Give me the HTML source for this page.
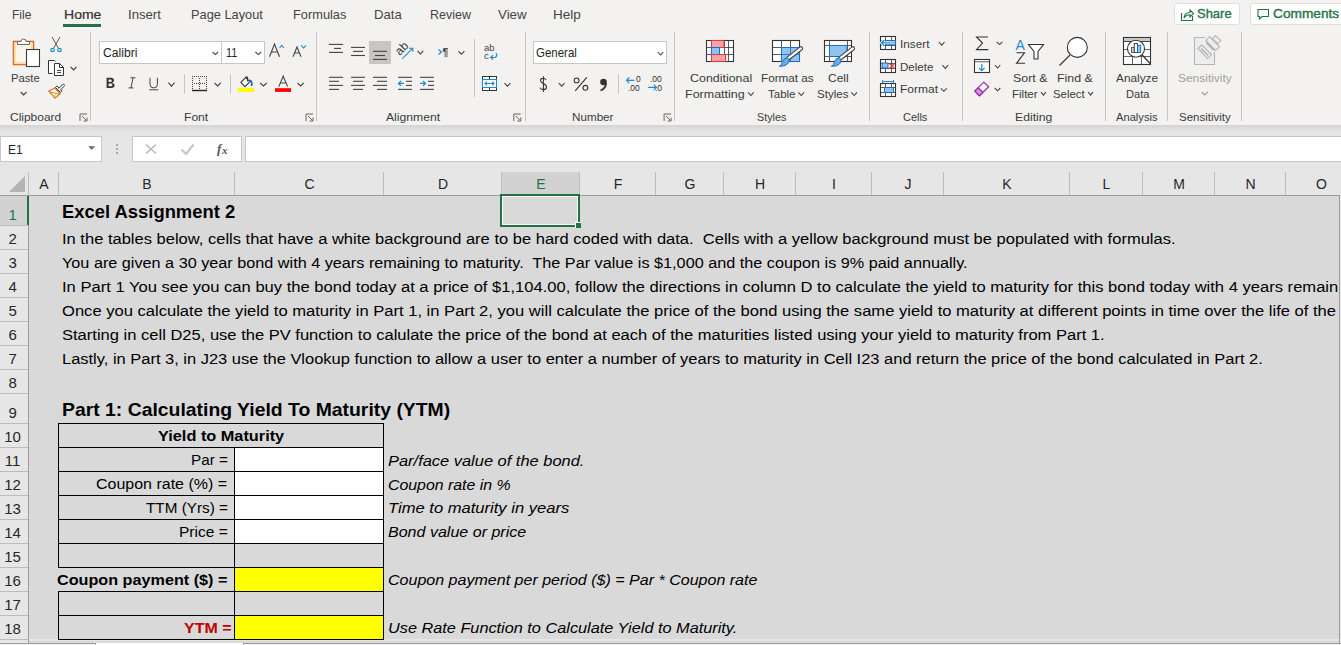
<!DOCTYPE html><html><head><meta charset='utf-8'><style>
*{margin:0;padding:0}
html,body{width:1341px;height:645px;overflow:hidden;background:#e6e6e6}
body{position:relative;font-family:"Liberation Sans",sans-serif}
.b{position:absolute}
.i{position:absolute;overflow:visible}
.t{position:absolute;white-space:pre;transform-origin:0 0}
.sc{transform:scaleX(1.0763)}
#clip{position:absolute;left:0;top:0;width:1339px;height:645px;overflow:hidden}
</style></head><body><div class='b' style='left:0px;top:0px;width:1341px;height:125px;background:#f3f2f1'></div>
<div class='b' style='left:0px;top:125px;width:1341px;height:47px;background:#e6e6e6'></div>
<div class='b' style='left:0px;top:125px;width:1341px;height:7px;background:linear-gradient(#d4d4d4,#e6e6e6)'></div>
<div class='b' style='left:0px;top:172px;width:1341px;height:473px;background:#e6e6e6'></div>
<div class='b' style='left:29px;top:196px;width:1310px;height:443px;background:#d9d9d9'></div>
<div class='b' style='left:28px;top:172px;width:1px;height:23px;background:#bcbcbc'></div>
<div class='b' style='left:58px;top:172px;width:1px;height:23px;background:#bcbcbc'></div>
<div class='b' style='left:234px;top:172px;width:1px;height:23px;background:#bcbcbc'></div>
<div class='b' style='left:383px;top:172px;width:1px;height:23px;background:#bcbcbc'></div>
<div class='b' style='left:501px;top:172px;width:1px;height:23px;background:#bcbcbc'></div>
<div class='b' style='left:579px;top:172px;width:1px;height:23px;background:#bcbcbc'></div>
<div class='b' style='left:655px;top:172px;width:1px;height:23px;background:#bcbcbc'></div>
<div class='b' style='left:723px;top:172px;width:1px;height:23px;background:#bcbcbc'></div>
<div class='b' style='left:795px;top:172px;width:1px;height:23px;background:#bcbcbc'></div>
<div class='b' style='left:871px;top:172px;width:1px;height:23px;background:#bcbcbc'></div>
<div class='b' style='left:943px;top:172px;width:1px;height:23px;background:#bcbcbc'></div>
<div class='b' style='left:1069px;top:172px;width:1px;height:23px;background:#bcbcbc'></div>
<div class='b' style='left:1142px;top:172px;width:1px;height:23px;background:#bcbcbc'></div>
<div class='b' style='left:1214px;top:172px;width:1px;height:23px;background:#bcbcbc'></div>
<div class='b' style='left:1285px;top:172px;width:1px;height:23px;background:#bcbcbc'></div>
<div class='b' style='left:0px;top:195px;width:1339px;height:1px;background:#9e9e9e'></div>
<div class='b' style='left:1339px;top:195px;width:1px;height:449px;background:#9e9e9e'></div>
<div class='b' style='left:0px;top:225px;width:28px;height:1px;background:#bcbcbc'></div>
<div class='b' style='left:0px;top:249px;width:28px;height:1px;background:#bcbcbc'></div>
<div class='b' style='left:0px;top:273px;width:28px;height:1px;background:#bcbcbc'></div>
<div class='b' style='left:0px;top:297px;width:28px;height:1px;background:#bcbcbc'></div>
<div class='b' style='left:0px;top:321px;width:28px;height:1px;background:#bcbcbc'></div>
<div class='b' style='left:0px;top:345px;width:28px;height:1px;background:#bcbcbc'></div>
<div class='b' style='left:0px;top:369px;width:28px;height:1px;background:#bcbcbc'></div>
<div class='b' style='left:0px;top:393px;width:28px;height:1px;background:#bcbcbc'></div>
<div class='b' style='left:0px;top:423px;width:28px;height:1px;background:#bcbcbc'></div>
<div class='b' style='left:0px;top:447px;width:28px;height:1px;background:#bcbcbc'></div>
<div class='b' style='left:0px;top:471px;width:28px;height:1px;background:#bcbcbc'></div>
<div class='b' style='left:0px;top:495px;width:28px;height:1px;background:#bcbcbc'></div>
<div class='b' style='left:0px;top:519px;width:28px;height:1px;background:#bcbcbc'></div>
<div class='b' style='left:0px;top:543px;width:28px;height:1px;background:#bcbcbc'></div>
<div class='b' style='left:0px;top:567px;width:28px;height:1px;background:#bcbcbc'></div>
<div class='b' style='left:0px;top:591px;width:28px;height:1px;background:#bcbcbc'></div>
<div class='b' style='left:0px;top:615px;width:28px;height:1px;background:#bcbcbc'></div>
<div class='b' style='left:0px;top:639px;width:28px;height:1px;background:#bcbcbc'></div>
<div class='b' style='left:28px;top:196px;width:1px;height:447px;background:#9e9e9e'></div>
<svg class='i' style='left:8px;top:175px;' width='18' height='18' viewBox='0 0 18 18'><path d='M17 1 L17 17 L1 17 Z' fill='#b4b4b4'/></svg>
<div class='b' style='left:502px;top:172px;width:77px;height:23px;background:#d2d2d2'></div>
<div class='b' style='left:0px;top:196px;width:28px;height:29px;background:#d2d2d2'></div>
<div class='b' style='left:27px;top:196px;width:2px;height:29px;background:#217346'></div>
<div class='b' style='left:29px;top:640px;width:1310px;height:3px;background:#d9d9d9'></div>
<div class='b' style='left:29px;top:640px;width:1310px;height:1px;background:#e4e4e4'></div>
<div class='b' style='left:0px;top:643px;width:1341px;height:2px;background:#f0f0f0'></div>
<div class='b' style='left:0px;top:643px;width:1341px;height:1px;background:#a0a0a0'></div>
<div class='b' style='left:95px;top:643px;width:149px;height:2px;background:#ffffff;border-left:1px solid #a0a0a0;border-right:1px solid #a0a0a0;box-sizing:border-box'></div>
<div class='b' style='left:58px;top:423px;width:326px;height:1px;background:#000'></div>
<div class='b' style='left:58px;top:447px;width:326px;height:1px;background:#000'></div>
<div class='b' style='left:58px;top:471px;width:326px;height:1px;background:#000'></div>
<div class='b' style='left:58px;top:495px;width:326px;height:1px;background:#000'></div>
<div class='b' style='left:58px;top:519px;width:326px;height:1px;background:#000'></div>
<div class='b' style='left:58px;top:543px;width:326px;height:1px;background:#000'></div>
<div class='b' style='left:58px;top:567px;width:326px;height:1px;background:#000'></div>
<div class='b' style='left:58px;top:591px;width:326px;height:1px;background:#000'></div>
<div class='b' style='left:58px;top:615px;width:326px;height:1px;background:#000'></div>
<div class='b' style='left:58px;top:639px;width:326px;height:1px;background:#000'></div>
<div class='b' style='left:58px;top:423px;width:1px;height:144px;background:#000'></div>
<div class='b' style='left:58px;top:591px;width:1px;height:49px;background:#000'></div>
<div class='b' style='left:383px;top:423px;width:1px;height:217px;background:#000'></div>
<div class='b' style='left:234px;top:447px;width:1px;height:193px;background:#000'></div>
<div class='b' style='left:235px;top:448px;width:148px;height:23px;background:#fff'></div>
<div class='b' style='left:235px;top:472px;width:148px;height:23px;background:#fff'></div>
<div class='b' style='left:235px;top:496px;width:148px;height:23px;background:#fff'></div>
<div class='b' style='left:235px;top:520px;width:148px;height:23px;background:#fff'></div>
<div class='b' style='left:235px;top:568px;width:148px;height:23px;background:#ffff00'></div>
<div class='b' style='left:235px;top:616px;width:148px;height:23px;background:#ffff00'></div>
<div class='b' style='left:500px;top:194px;width:80px;height:33px;border:2px solid #217346;box-sizing:border-box'></div>
<div class='b' style='left:502px;top:196px;width:76px;height:29px;border:1px solid #fff;box-sizing:border-box'></div>
<div class='b' style='left:575px;top:222px;width:6px;height:6px;background:#fff'></div>
<div class='b' style='left:576px;top:223px;width:5px;height:5px;background:#217346'></div>
<div class='b' style='left:63px;top:24px;width:38px;height:3px;background:#217346'></div>
<div class='b' style='left:1174px;top:3px;width:66px;height:22px;background:#fff;border:1px solid #e1dfdd;border-radius:3px;box-sizing:border-box'></div>
<div class='b' style='left:1250px;top:3px;width:100px;height:22px;background:#fff;border:1px solid #e1dfdd;border-radius:3px;box-sizing:border-box'></div>
<div class='b' style='left:90px;top:32px;width:1px;height:89px;background:#c8c6c4'></div>
<div class='b' style='left:316px;top:32px;width:1px;height:89px;background:#c8c6c4'></div>
<div class='b' style='left:525px;top:32px;width:1px;height:89px;background:#c8c6c4'></div>
<div class='b' style='left:674px;top:32px;width:1px;height:89px;background:#c8c6c4'></div>
<div class='b' style='left:869px;top:32px;width:1px;height:89px;background:#c8c6c4'></div>
<div class='b' style='left:962px;top:32px;width:1px;height:89px;background:#c8c6c4'></div>
<div class='b' style='left:1105px;top:32px;width:1px;height:89px;background:#c8c6c4'></div>
<div class='b' style='left:1167px;top:32px;width:1px;height:89px;background:#c8c6c4'></div>
<div class='b' style='left:1241px;top:32px;width:1px;height:89px;background:#c8c6c4'></div>
<div class='b' style='left:99px;top:41px;width:123px;height:23px;background:#fff;border:1px solid #c8c6c4;box-sizing:border-box'></div>
<div class='b' style='left:221px;top:41px;width:44px;height:23px;background:#fff;border:1px solid #c8c6c4;box-sizing:border-box'></div>
<div class='b' style='left:533px;top:41px;width:134px;height:23px;background:#fff;border:1px solid #c8c6c4;box-sizing:border-box'></div>
<div class='b' style='left:369px;top:41px;width:22px;height:23px;background:#c8c6c4'></div>
<div class='b' style='left:0px;top:136px;width:102px;height:26px;background:#fff;border:1px solid #c6c6c6;box-sizing:border-box'></div>
<div class='b' style='left:132px;top:136px;width:110px;height:26px;background:#fff;border:1px solid #c6c6c6;box-sizing:border-box'></div>
<div class='b' style='left:245px;top:136px;width:1100px;height:26px;background:#fff;border:1px solid #c6c6c6;box-sizing:border-box'></div>
<div class='b' style='left:184px;top:74px;width:1px;height:20px;background:#c8c6c4'></div>
<div class='b' style='left:230px;top:74px;width:1px;height:20px;background:#c8c6c4'></div>
<div class='b' style='left:618px;top:74px;width:1px;height:20px;background:#c8c6c4'></div>
<div class='b' style='left:474px;top:39px;width:1px;height:58px;background:#c8c6c4'></div>
<svg class='i' style='left:0;top:0' width='1341' height='170' viewBox='0 0 1341 170'><rect x='13.5' y='41.5' width='20' height='23' fill='#fff' stroke='#d9731f' stroke-width='1.6'/><rect x='15.5' y='43.5' width='16' height='19' fill='#fbf6ec' stroke='#fbe3a8' stroke-width='1.2'/><path d='M17.5 44.5 V41.5 H21 A2.5 2.5 0 0 1 26 41.5 H29.5 V44.5 Z' fill='#fff' stroke='#666' stroke-width='1'/><rect x='26.5' y='49.5' width='13' height='17' fill='#fff' stroke='#3b3b3b' stroke-width='1.1'/><path d='M20.7 92 L23.6 95 L26.5 92' fill='none' stroke='#444' stroke-width='1.1'/><path d='M52 37 L58.5 48.5 M60 37 L53.5 48.5' stroke='#555' stroke-width='1' fill='none'/><circle cx='52.5' cy='50' r='1.7' fill='none' stroke='#1e8bcd' stroke-width='1.2'/><circle cx='59.5' cy='50' r='1.7' fill='none' stroke='#1e8bcd' stroke-width='1.2'/><path d='M52.5 73.5 H48.5 V60.5 H54.5 L55.5 61.5' fill='#fafafa' stroke='#333' stroke-width='1'/><path d='M54.5 63.5 H59.5 L63.5 67.5 V75.5 H54.5 Z' fill='#fff' stroke='#333' stroke-width='1'/><path d='M59.5 63.5 V67.5 H63.5' fill='none' stroke='#333' stroke-width='1'/><path d='M57 70.5 H61 M57 72.5 H61' stroke='#444' stroke-width='1'/><path d='M70.7 67 L73.6 70 L76.5 67' fill='none' stroke='#444' stroke-width='1.1'/><path d='M48.8 91.1 L54.9 88 L60.2 93.8 L55.1 98.1 Z' fill='#fff' stroke='#e07b1e' stroke-width='1.3' stroke-linejoin='round'/><path d='M49.8 92 L60 94.3' stroke='#e07b1e' stroke-width='1.1'/><path d='M52.3 94.6 L57.8 95.5 L55.2 97.3 Z' fill='#f7c76a'/><path d='M55.4 87.4 L56.9 85.9 L61.9 90.9 L60.4 92.4 Z' fill='#fff' stroke='#333' stroke-width='1'/><path d='M58.6 88.6 L62.4 84.8 Q63.4 83.8 64.2 84.6 Q65 85.4 64 86.4 L60.2 90.2' fill='#fff' stroke='#333' stroke-width='1'/><path d='M212.6 52 L215.35 54.6 L218.1 52' fill='none' stroke='#444' stroke-width='1.1'/><path d='M255.4 52 L258.3 54.6 L261.2 52' fill='none' stroke='#444' stroke-width='1.1'/><path d='M269.5 56.7 L274.5 44 L279.5 56.7 M271.3 52 H277.7' fill='none' stroke='#444' stroke-width='1.1'/><path d='M279.5 48 L281.8 45.3 L284 48' fill='none' stroke='#1e8bcd' stroke-width='1.1'/><path d='M293 56.7 L297 47 L301 56.7 M294.5 53 H299.5' fill='none' stroke='#444' stroke-width='1.1'/><path d='M301 45.3 L303.5 48 L306 45.3' fill='none' stroke='#1e8bcd' stroke-width='1.1'/><path d='M106.6 77.8 H110.8 Q114 77.8 114 80.5 Q114 82.3 111.8 82.7 Q114.6 83.2 114.6 85.3 Q114.6 87.9 111 87.9 H106.6 Z M108.6 79.6 V82 H110.5 Q111.8 82 111.8 80.8 Q111.8 79.6 110.5 79.6 Z M108.6 83.6 V86.2 H110.8 Q112.4 86.2 112.4 84.9 Q112.4 83.6 110.8 83.6 Z' fill='#333' fill-rule='evenodd'/><path d='M130.5 77.8 H135.5 M128.5 87.9 H133.5 M133 77.8 L131 87.9' stroke='#444' stroke-width='1' fill='none'/><path d='M150 77.8 V84.5 Q150 87.9 153.7 87.9 Q157.4 87.9 157.4 84.5 V77.8 M149.3 89.8 H158.2' stroke='#444' stroke-width='1' fill='none'/><path d='M168.4 82.7 L171.5 86.2 L174.6 82.7' fill='none' stroke='#444' stroke-width='1.1'/><rect x='192' y='76' width='1' height='1' fill='#444'/><rect x='194' y='76' width='1' height='1' fill='#444'/><rect x='196' y='76' width='1' height='1' fill='#444'/><rect x='198' y='76' width='1' height='1' fill='#444'/><rect x='200' y='76' width='1' height='1' fill='#444'/><rect x='202' y='76' width='1' height='1' fill='#444'/><rect x='204' y='76' width='1' height='1' fill='#444'/><rect x='206' y='76' width='1' height='1' fill='#444'/><rect x='192' y='78' width='1' height='1' fill='#444'/><rect x='206' y='78' width='1' height='1' fill='#444'/><rect x='199' y='78' width='1' height='1' fill='#444'/><rect x='192' y='80' width='1' height='1' fill='#444'/><rect x='206' y='80' width='1' height='1' fill='#444'/><rect x='199' y='80' width='1' height='1' fill='#444'/><rect x='192' y='82' width='1' height='1' fill='#444'/><rect x='206' y='82' width='1' height='1' fill='#444'/><rect x='199' y='82' width='1' height='1' fill='#444'/><rect x='192' y='84' width='1' height='1' fill='#444'/><rect x='206' y='84' width='1' height='1' fill='#444'/><rect x='199' y='84' width='1' height='1' fill='#444'/><rect x='192' y='86' width='1' height='1' fill='#444'/><rect x='206' y='86' width='1' height='1' fill='#444'/><rect x='199' y='86' width='1' height='1' fill='#444'/><rect x='192' y='88' width='1' height='1' fill='#444'/><rect x='206' y='88' width='1' height='1' fill='#444'/><rect x='199' y='88' width='1' height='1' fill='#444'/><rect x='194' y='83' width='1' height='1' fill='#444'/><rect x='196' y='83' width='1' height='1' fill='#444'/><rect x='198' y='83' width='1' height='1' fill='#444'/><rect x='200' y='83' width='1' height='1' fill='#444'/><rect x='202' y='83' width='1' height='1' fill='#444'/><rect x='204' y='83' width='1' height='1' fill='#444'/><path d='M192 90.5 H207' stroke='#222' stroke-width='1.4'/><path d='M214.6 83 L217.6 86 L220.6 83' fill='none' stroke='#444' stroke-width='1.1'/><path d='M245.6 77.6 L240.9 82.4 L245 86.6 L250 81.6 Z' fill='#fff' stroke='#333' stroke-width='1.1' stroke-linejoin='round'/><path d='M245.6 77.6 Q246.6 75.9 247.6 77.5 V81.4' fill='none' stroke='#333' stroke-width='1.1'/><path d='M249.3 80.4 Q252.4 80.2 251.6 86' fill='none' stroke='#1565c0' stroke-width='1.7'/><rect x='238' y='88' width='16' height='4' fill='#ffff00'/><path d='M260.2 83 L263.45 86 L266.7 83' fill='none' stroke='#444' stroke-width='1.1'/><path d='M278.8 86.6 L283.2 76.2 L287.6 86.6 M280.4 83 H286' fill='none' stroke='#444' stroke-width='1.1'/><rect x='275' y='88.2' width='16' height='3.7' fill='#ff0000'/><path d='M297.5 83 L300.6 86 L303.7 83' fill='none' stroke='#444' stroke-width='1.1'/><path d='M80.0 121.0 V114.0 H87.0' fill='none' stroke='#666' stroke-width='1'/><path d='M82.0 116.0 L86.5 120.5 M87.0 117.5 V121.0 H83.5' fill='none' stroke='#666' stroke-width='1'/><path d='M306.0 121.0 V114.0 H313.0' fill='none' stroke='#666' stroke-width='1'/><path d='M308.0 116.0 L312.5 120.5 M313.0 117.5 V121.0 H309.5' fill='none' stroke='#666' stroke-width='1'/><path d='M513.8 121.0 V114.0 H520.8' fill='none' stroke='#666' stroke-width='1'/><path d='M515.8 116.0 L520.3 120.5 M520.8 117.5 V121.0 H517.3' fill='none' stroke='#666' stroke-width='1'/><path d='M664.1 121.0 V114.0 H671.1' fill='none' stroke='#666' stroke-width='1'/><path d='M666.1 116.0 L670.6 120.5 M671.1 117.5 V121.0 H667.6' fill='none' stroke='#666' stroke-width='1'/><path d='M329 44.4 H343' stroke='#444' stroke-width='1.1'/><path d='M334 48.4 H341' stroke='#444' stroke-width='1.1'/><path d='M329 52.4 H343' stroke='#444' stroke-width='1.1'/><path d='M351 47.4 H365' stroke='#444' stroke-width='1.1'/><path d='M353 51.4 H363' stroke='#444' stroke-width='1.1'/><path d='M351 55.5 H365' stroke='#444' stroke-width='1.1'/><path d='M373 51.3 H387' stroke='#444' stroke-width='1.1'/><path d='M375 55.5 H385' stroke='#444' stroke-width='1.1'/><path d='M373 59.4 H387' stroke='#444' stroke-width='1.1'/><text x='0' y='0' transform='translate(399.7 56) rotate(-45)' font-family='Liberation Sans' font-size='12' fill='#333'>ab</text><path d='M402.3 58.7 L412.6 48.4 M409 48.2 H412.8 V52' fill='none' stroke='#1e8bcd' stroke-width='1.1'/><path d='M417.5 50.8 L420.4 53.9 L423.3 50.8' fill='none' stroke='#444' stroke-width='1.1'/><path d='M438.5 49.5 L441.5 52 L438.5 54.5' fill='none' stroke='#1e8bcd' stroke-width='1.3'/><text x='442.5' y='56' font-family='Liberation Sans' font-size='10.5' font-weight='bold' fill='#444'>¶</text><path d='M458.4 51.1 L461.4 54.1 L464.4 51.1' fill='none' stroke='#444' stroke-width='1.1'/><text x='484' y='51.3' font-family='Liberation Sans' font-size='9.5' fill='#444'>ab</text><text x='484' y='59' font-family='Liberation Sans' font-size='9.5' fill='#444'>c</text><path d='M496 53 Q498 56 495 57.5 H491 M493 55.3 L490.7 57.5 L493 59.5' fill='none' stroke='#1e8bcd' stroke-width='1.2'/><path d='M329 77.3 H343' stroke='#444' stroke-width='1.1'/><path d='M329 81.3 H339' stroke='#444' stroke-width='1.1'/><path d='M329 85.4 H343' stroke='#444' stroke-width='1.1'/><path d='M329 89.4 H339' stroke='#444' stroke-width='1.1'/><path d='M351 77.3 H365' stroke='#444' stroke-width='1.1'/><path d='M353 81.3 H363' stroke='#444' stroke-width='1.1'/><path d='M351 85.4 H365' stroke='#444' stroke-width='1.1'/><path d='M353 89.4 H363' stroke='#444' stroke-width='1.1'/><path d='M373 77.3 H387' stroke='#444' stroke-width='1.1'/><path d='M377 81.3 H387' stroke='#444' stroke-width='1.1'/><path d='M373 85.4 H387' stroke='#444' stroke-width='1.1'/><path d='M377 89.4 H387' stroke='#444' stroke-width='1.1'/><path d='M398 77.3 H412' stroke='#444' stroke-width='1.1'/><path d='M406 81.3 H412' stroke='#444' stroke-width='1.1'/><path d='M406 85.4 H412' stroke='#444' stroke-width='1.1'/><path d='M398 89.4 H412' stroke='#444' stroke-width='1.1'/><path d='M404 83.4 H398.5 M401 81 L398.5 83.4 L401 85.8' fill='none' stroke='#1e8bcd' stroke-width='1.2'/><path d='M420 77.3 H434' stroke='#444' stroke-width='1.1'/><path d='M428 81.3 H434' stroke='#444' stroke-width='1.1'/><path d='M428 85.4 H434' stroke='#444' stroke-width='1.1'/><path d='M420 89.4 H434' stroke='#444' stroke-width='1.1'/><path d='M420 83.4 H425.5 M423 81 L425.5 83.4 L423 85.8' fill='none' stroke='#1e8bcd' stroke-width='1.2'/><rect x='482.5' y='76.5' width='14' height='14' fill='#fff' stroke='#333' stroke-width='1'/><rect x='482.5' y='79.5' width='14' height='8' fill='#fff' stroke='#1e8bcd' stroke-width='1.1'/><path d='M489.5 76.5 V79 M489.5 88 V90.5' stroke='#333' stroke-width='1'/><path d='M485 83.5 H494 M486.8 81.7 L485 83.5 L486.8 85.3 M492.2 81.7 L494 83.5 L492.2 85.3' fill='none' stroke='#1e8bcd' stroke-width='1.1'/><path d='M504.5 83.2 L507.45 86.2 L510.4 83.2' fill='none' stroke='#444' stroke-width='1.1'/><path d='M657.8 52 L660.55 55 L663.3 52' fill='none' stroke='#444' stroke-width='1.1'/><path d='M546 80 Q545 78.3 543 78.3 Q540.5 78.3 540.5 80.6 Q540.5 82.4 543.3 83.5 Q546.5 84.7 546.5 86.9 Q546.5 89.6 543.3 89.6 Q540.8 89.6 540 87.6 M543.4 76.3 V92' fill='none' stroke='#333' stroke-width='1.1'/><path d='M558.8 83.2 L561.7 86.2 L564.6 83.2' fill='none' stroke='#444' stroke-width='1.1'/><circle cx='576.6' cy='80.4' r='2.4' fill='none' stroke='#333' stroke-width='1.1'/><circle cx='585.4' cy='87.8' r='2.4' fill='none' stroke='#333' stroke-width='1.1'/><path d='M586.8 77.3 L575.2 90.9' stroke='#333' stroke-width='1.1'/><circle cx='603.5' cy='82' r='3.3' fill='#333'/><path d='M606 83 Q606 88.5 600.5 90.5' fill='none' stroke='#333' stroke-width='1.8'/><path d='M634.5 80.3 H626.5 M629.3 77.5 L626.5 80.3 L629.3 83.1' fill='none' stroke='#1e8bcd' stroke-width='1.2'/><text x='636' y='82.4' font-family='Liberation Sans' font-size='8.5' fill='#333'>0</text><text x='628' y='90.6' font-family='Liberation Sans' font-size='8.5' fill='#333'>.00</text><text x='650' y='82.4' font-family='Liberation Sans' font-size='8.5' fill='#333'>.00</text><text x='655' y='90.6' font-family='Liberation Sans' font-size='8.5' fill='#333'>.0</text><path d='M648.2 87.4 H656.5 M653.7 84.6 L656.5 87.4 L653.7 90.2' fill='none' stroke='#1e8bcd' stroke-width='1.2'/><rect x='706.5' y='40.5' width='27' height='21' fill='#fff' stroke='#333' stroke-width='1.1'/><path d='M711.5 40 V62' stroke='#333' stroke-width='0.8'/><path d='M724.5 40 V62' stroke='#333' stroke-width='0.8'/><path d='M728.5 40 V62' stroke='#333' stroke-width='0.8'/><path d='M706 47.5 H734' stroke='#333' stroke-width='0.8'/><path d='M706 54.5 H734' stroke='#333' stroke-width='0.8'/><rect x='711.5' y='40.5' width='12.5' height='7' fill='#f7a1a8' stroke='#e03a3e' stroke-width='1'/><rect x='711.5' y='47.5' width='8' height='7' fill='#90c3ef' stroke='#1e6fc1' stroke-width='1'/><rect x='711.5' y='54.5' width='14' height='7' fill='#f7a1a8' stroke='#e03a3e' stroke-width='1'/><rect x='772.5' y='40.5' width='27' height='21' fill='#fff' stroke='#333' stroke-width='1.1'/><path d='M781.5 40 V62' stroke='#333' stroke-width='0.8'/><path d='M790.5 40 V62' stroke='#333' stroke-width='0.8'/><path d='M772 47.5 H800' stroke='#333' stroke-width='0.8'/><path d='M772 54.5 H800' stroke='#333' stroke-width='0.8'/><rect x='781.5' y='47.5' width='18' height='14' fill='#90c3ef' stroke='#1e6fc1' stroke-width='1'/><path d='M790.5 47.5 V61.5 M781.5 54.5 H799.5' stroke='#1e6fc1' stroke-width='0.8'/><path d='M787.8 58.7 L800.9 48.400000000000006' stroke='#444' stroke-width='4.4' stroke-linecap='round'/><path d='M787.8 58.7 L800.9 48.400000000000006' stroke='#fff' stroke-width='2.2' stroke-linecap='round'/><path d='M779.3 66.2 Q781.8 65.7 782.3 62.2 Q783.3 58.2 787.3 57.7 Q789.8 59.2 788.8 62.2 Q786.3 66.7 779.3 66.2 Z' fill='#6aaae6' stroke='#1e6fc1' stroke-width='1'/><rect x='824.5' y='40.5' width='27' height='21' fill='#fff' stroke='#333' stroke-width='1.1'/><path d='M829.5 40 V62' stroke='#333' stroke-width='0.8'/><path d='M847.5 40 V62' stroke='#333' stroke-width='0.8'/><path d='M824 45.5 H852' stroke='#333' stroke-width='0.8'/><path d='M824 56.5 H852' stroke='#333' stroke-width='0.8'/><rect x='829.5' y='45.5' width='17.5' height='11' fill='#90c3ef' stroke='#1e6fc1' stroke-width='1'/><path d='M839.8 58.7 L852.9 48.400000000000006' stroke='#444' stroke-width='4.4' stroke-linecap='round'/><path d='M839.8 58.7 L852.9 48.400000000000006' stroke='#fff' stroke-width='2.2' stroke-linecap='round'/><path d='M831.3 66.2 Q833.8 65.7 834.3 62.2 Q835.3 58.2 839.3 57.7 Q841.8 59.2 840.8 62.2 Q838.3 66.7 831.3 66.2 Z' fill='#6aaae6' stroke='#1e6fc1' stroke-width='1'/><path d='M748.2 92.3 L750.95 95.5 L753.7 92.3' fill='none' stroke='#444' stroke-width='1.1'/><path d='M798.4 92.3 L801.25 95.5 L804.1 92.3' fill='none' stroke='#444' stroke-width='1.1'/><path d='M851.3 92.3 L854.15 95.5 L857 92.3' fill='none' stroke='#444' stroke-width='1.1'/><rect x='880.5' y='36.5' width='15' height='13' fill='#fff' stroke='#333' stroke-width='1.1'/><path d='M885.5 36 V50' stroke='#333' stroke-width='0.8'/><path d='M891.5 36 V50' stroke='#333' stroke-width='0.8'/><path d='M880 40.5 H896' stroke='#333' stroke-width='0.8'/><path d='M880 45.5 H896' stroke='#333' stroke-width='0.8'/><rect x='885.5' y='40.5' width='10' height='4.5' fill='#90c3ef' stroke='#1e6fc1' stroke-width='1'/><rect x='881' y='40.6' width='4' height='4.6' fill='#fff'/><path d='M890.5 42.8 H881.5 M884.3 40 L881.5 42.8 L884.3 45.6' fill='none' stroke='#fff' stroke-width='2.6'/><path d='M890.5 42.8 H881.5 M884.3 40 L881.5 42.8 L884.3 45.6' fill='none' stroke='#1e8bcd' stroke-width='1.3'/><rect x='880.5' y='59.5' width='15' height='13' fill='#fff' stroke='#333' stroke-width='1.1'/><path d='M885.5 59 V73' stroke='#333' stroke-width='0.8'/><path d='M891.5 59 V73' stroke='#333' stroke-width='0.8'/><path d='M880 63.5 H896' stroke='#333' stroke-width='0.8'/><path d='M880 68.5 H896' stroke='#333' stroke-width='0.8'/><rect x='882' y='63' width='6' height='5' fill='#90c3ef' stroke='#1e6fc1' stroke-width='1'/><path d='M889.5 63.5 L894.5 68.5 M894.5 63.5 L889.5 68.5' stroke='#e8383d' stroke-width='1.2'/><rect x='880.5' y='83.5' width='15' height='13' fill='#fff' stroke='#333' stroke-width='1.1'/><path d='M885.5 83 V97' stroke='#333' stroke-width='0.8'/><path d='M891.5 83 V97' stroke='#333' stroke-width='0.8'/><path d='M880 87.5 H896' stroke='#333' stroke-width='0.8'/><path d='M880 92.5 H896' stroke='#333' stroke-width='0.8'/><rect x='884.5' y='87.5' width='9' height='5' fill='#90c3ef' stroke='#1e6fc1' stroke-width='1'/><path d='M882.5 81.5 H893.5 M882.5 80 V83 M893.5 80 V83' fill='none' stroke='#1e8bcd' stroke-width='1'/><path d='M938.8 42 L941.7 45.2 L944.6 42' fill='none' stroke='#444' stroke-width='1.1'/><path d='M942.4 65.2 L945.3 68.4 L948.2 65.2' fill='none' stroke='#444' stroke-width='1.1'/><path d='M940.9 88.4 L943.8 91.3 L946.7 88.4' fill='none' stroke='#444' stroke-width='1.1'/><path d='M988 37 H976.5 L982.5 43 L976.5 49.6 H988.3' fill='none' stroke='#333' stroke-width='1.1'/><path d='M996.7 41.9 L999.55 44.6 L1002.4 41.9' fill='none' stroke='#444' stroke-width='1.1'/><rect x='974.5' y='59.5' width='15' height='13' fill='#fff' stroke='#333' stroke-width='1.1'/><path d='M974.5 61.8 H989.5' stroke='#333' stroke-width='0.8'/><path d='M981.8 63.8 V70.5 M979 67.8 L981.8 70.6 L984.6 67.8' fill='none' stroke='#1e8bcd' stroke-width='1.2'/><path d='M994.8 65 L997.55 68 L1000.3 65' fill='none' stroke='#444' stroke-width='1.1'/><path d='M974.8 91.1 L983.8 82.1 L988.6 86.7 L979.5 95.7 Z' fill='#fff' stroke='#9b30b0' stroke-width='1.3' stroke-linejoin='round'/><path d='M974.8 91.1 L978.2 87.7 L983 92.2 L979.5 95.7 Z' fill='#d88ee0' stroke='#9b30b0' stroke-width='1.3' stroke-linejoin='round'/><path d='M994.8 88 L997.55 90.8 L1000.3 88' fill='none' stroke='#444' stroke-width='1.1'/><text x='1015.5' y='50.1' font-family='Liberation Sans' font-size='14' fill='#1e8bcd'>A</text><path d='M1016.5 52.8 H1024.5 L1016.5 63.3 H1025' fill='none' stroke='#333' stroke-width='1.1'/><path d='M1028.5 44.5 H1043.5 L1038 51.5 V59 H1034 V51.5 Z' fill='#fff' stroke='#333' stroke-width='1.1'/><circle cx='1077.3' cy='47.4' r='10' fill='#fff' stroke='#333' stroke-width='1.1'/><path d='M1070 55 L1059.5 65.5' stroke='#333' stroke-width='1.1'/><path d='M1041 92.1 L1043.4 95.1 L1045.8 92.1' fill='none' stroke='#444' stroke-width='1.1'/><path d='M1088.2 92.1 L1090.6 95.1 L1093 92.1' fill='none' stroke='#444' stroke-width='1.1'/><rect x='1123.5' y='37.5' width='27' height='27' fill='#fff' stroke='#333' stroke-width='1.1'/><rect x='1124' y='38' width='26' height='3' fill='#c8c8c8'/><path d='M1124 41.5 H1150' stroke='#333' stroke-width='0.9'/><path d='M1123.5 49.5 H1150 M1123.5 56.5 H1150 M1132.5 56.5 V64.5 M1141.5 56.5 V64.5' stroke='#555' stroke-width='0.9'/><circle cx='1136' cy='48.7' r='8.5' fill='#fff' stroke='#333' stroke-width='1.1'/><path d='M1142 54.7 L1150.5 64' stroke='#333' stroke-width='1.3'/><rect x='1131.5' y='47.5' width='2.8' height='5' fill='#d0d0d0' stroke='#444' stroke-width='0.8'/><rect x='1134.3' y='43.5' width='3.2' height='9' fill='#fff' stroke='#333' stroke-width='0.9'/><rect x='1137.5' y='45.3' width='3.2' height='7.2' fill='#8cc4f2' stroke='#1565c0' stroke-width='0.9'/><rect x='1194.5' y='37.5' width='20' height='27' fill='#ededed' stroke='none'/><path d='M1205 37.5 H1194.5 V64.5 H1214.5 V52' fill='none' stroke='#b5b5b5' stroke-width='1.1'/><path d='M1198 48.5 L1201.7 45.1 L1211.5 54.6 L1207.6 58.5 Z' fill='#ededed' stroke='#b5b5b5' stroke-width='1.1'/><path d='M1201 48.6 L1208.2 55.3' stroke='#b5b5b5' stroke-width='1.6'/><path d='M1212.5 38.8 L1215.4 35.6 L1220.8 40.6 L1217.8 43.6 Z' fill='#ededed' stroke='#b5b5b5' stroke-width='1.1'/><path d='M1205.9 40.5 L1209.5 36.5 L1219.6 46.8 L1215.4 50.4 Z' fill='#ededed' stroke='#b5b5b5' stroke-width='1.1'/><path d='M1206.5 42.5 L1214 50' stroke='#b5b5b5' stroke-width='2.4'/><path d='M1201.7 92 L1204.7 95 L1207.7 92' fill='none' stroke='#a19f9d' stroke-width='1.1'/><path d='M1181.5 13 V20.5 H1192.5 V16' fill='none' stroke='#217346' stroke-width='1.2'/><path d='M1184 18 Q1184.5 12.5 1190 12.5 V10 L1193.5 13.5 L1190 17 V14.8 Q1186 14.8 1184 18 Z' fill='none' stroke='#217346' stroke-width='1.1'/><path d='M1258 9.5 H1268.5 V16.5 H1262 L1259.5 19 V16.5 H1258 Z' fill='none' stroke='#217346' stroke-width='1.1'/><path d='M88.2 146.2 H95.1 L91.65 149.8 Z' fill='#666'/><rect x='116' y='144' width='2' height='2' fill='#aaa'/><rect x='116' y='148' width='2' height='2' fill='#aaa'/><rect x='116' y='152' width='2' height='2' fill='#aaa'/><path d='M146 144.5 L156 153.5 M156 144.5 L146 153.5' stroke='#b4b4b4' stroke-width='1.4'/><path d='M181.5 149.5 L186 154 L193.5 144.5' fill='none' stroke='#c8c8c8' stroke-width='2.3'/><text x='217' y='152.5' font-family='Liberation Serif' font-style='italic' font-weight='bold' font-size='13' fill='#555'>f</text><text x='222' y='153.5' font-family='Liberation Serif' font-style='italic' font-weight='bold' font-size='11' fill='#555'>x</text></svg>
<div id='clip'><div class='t ' style='left:39.33px;top:175.75px;font-size:14px;line-height:16.8px;;color:#262626;'>A</div>
<div class='t ' style='left:142.33px;top:175.75px;font-size:14px;line-height:16.8px;;color:#262626;'>B</div>
<div class='t ' style='left:304.44px;top:175.75px;font-size:14px;line-height:16.8px;;color:#262626;'>C</div>
<div class='t ' style='left:437.94px;top:175.75px;font-size:14px;line-height:16.8px;;color:#262626;'>D</div>
<div class='t ' style='left:536.33px;top:175.75px;font-size:14px;line-height:16.8px;;color:#217346;'>E</div>
<div class='t ' style='left:613.72px;top:175.75px;font-size:14px;line-height:16.8px;;color:#262626;'>F</div>
<div class='t ' style='left:684.55px;top:175.75px;font-size:14px;line-height:16.8px;;color:#262626;'>G</div>
<div class='t ' style='left:754.94px;top:175.75px;font-size:14px;line-height:16.8px;;color:#262626;'>H</div>
<div class='t ' style='left:832.05px;top:175.75px;font-size:14px;line-height:16.8px;;color:#262626;'>I</div>
<div class='t ' style='left:904.50px;top:175.75px;font-size:14px;line-height:16.8px;;color:#262626;'>J</div>
<div class='t ' style='left:1002.33px;top:175.75px;font-size:14px;line-height:16.8px;;color:#262626;'>K</div>
<div class='t ' style='left:1102.60px;top:175.75px;font-size:14px;line-height:16.8px;;color:#262626;'>L</div>
<div class='t ' style='left:1173.16px;top:175.75px;font-size:14px;line-height:16.8px;;color:#262626;'>M</div>
<div class='t ' style='left:1245.44px;top:175.75px;font-size:14px;line-height:16.8px;;color:#262626;'>N</div>
<div class='t ' style='left:1316.05px;top:175.75px;font-size:14px;line-height:16.8px;;color:#262626;'>O</div>
<div class='t ' style='left:8.43px;top:205.80px;font-size:15px;line-height:18.0px;;color:#217346;'>1</div>
<div class='t ' style='left:8.43px;top:229.80px;font-size:15px;line-height:18.0px;;color:#262626;'>2</div>
<div class='t ' style='left:8.43px;top:253.80px;font-size:15px;line-height:18.0px;;color:#262626;'>3</div>
<div class='t ' style='left:8.43px;top:277.80px;font-size:15px;line-height:18.0px;;color:#262626;'>4</div>
<div class='t ' style='left:8.43px;top:301.80px;font-size:15px;line-height:18.0px;;color:#262626;'>5</div>
<div class='t ' style='left:8.43px;top:325.80px;font-size:15px;line-height:18.0px;;color:#262626;'>6</div>
<div class='t ' style='left:8.43px;top:349.80px;font-size:15px;line-height:18.0px;;color:#262626;'>7</div>
<div class='t ' style='left:8.43px;top:373.80px;font-size:15px;line-height:18.0px;;color:#262626;'>8</div>
<div class='t ' style='left:8.43px;top:403.80px;font-size:15px;line-height:18.0px;;color:#262626;'>9</div>
<div class='t ' style='left:4.26px;top:427.80px;font-size:15px;line-height:18.0px;;color:#262626;'>10</div>
<div class='t ' style='left:4.81px;top:451.80px;font-size:15px;line-height:18.0px;;color:#262626;'>11</div>
<div class='t ' style='left:4.26px;top:475.80px;font-size:15px;line-height:18.0px;;color:#262626;'>12</div>
<div class='t ' style='left:4.26px;top:499.80px;font-size:15px;line-height:18.0px;;color:#262626;'>13</div>
<div class='t ' style='left:4.26px;top:523.80px;font-size:15px;line-height:18.0px;;color:#262626;'>14</div>
<div class='t ' style='left:4.26px;top:547.80px;font-size:15px;line-height:18.0px;;color:#262626;'>15</div>
<div class='t ' style='left:4.26px;top:571.80px;font-size:15px;line-height:18.0px;;color:#262626;'>16</div>
<div class='t ' style='left:4.26px;top:595.80px;font-size:15px;line-height:18.0px;;color:#262626;'>17</div>
<div class='t ' style='left:4.26px;top:619.80px;font-size:15px;line-height:18.0px;;color:#262626;'>18</div>
<div class='t ' style='left:62.20px;top:200.70px;font-size:18.6px;line-height:22.32px;font-weight:bold;transform:scaleX(0.9897);'>Excel Assignment 2</div>
<div class='t ' style='left:62.20px;top:230.02px;font-size:15.4px;line-height:18.48px;;transform:scaleX(1.0730);'>In the tables below, cells that have a white background are to be hard coded with data.  Cells with a yellow background must be populated with formulas.</div>
<div class='t ' style='left:62.20px;top:254.02px;font-size:15.4px;line-height:18.48px;;transform:scaleX(1.0539);'>You are given a 30 year bond with 4 years remaining to maturity.  The Par value is $1,000 and the coupon is 9% paid annually.</div>
<div class='t sc' style='left:62.20px;top:278.02px;font-size:15.4px;line-height:18.48px;;'>In Part 1 You see you can buy the bond today at a price of $1,104.00, follow the directions in column D to calculate the yield to maturity for this bond today with 4 years remaining to maturity.</div>
<div class='t sc' style='left:62.20px;top:302.02px;font-size:15.4px;line-height:18.48px;;'>Once you calculate the yield to maturity in Part 1, in Part 2, you will calculate the price of the bond using the same yield to maturity at different points in time over the life of the bond.</div>
<div class='t ' style='left:62.20px;top:326.02px;font-size:15.4px;line-height:18.48px;;transform:scaleX(1.0738);'>Starting in cell D25, use the PV function to calulate the price of the bond at each of the maturities listed using your yield to maturity from Part 1.</div>
<div class='t ' style='left:62.20px;top:350.02px;font-size:15.4px;line-height:18.48px;;transform:scaleX(1.0693);'>Lastly, in Part 3, in J23 use the Vlookup function to allow a user to enter a number of years to maturity in Cell I23 and return the price of the bond calculated in Part 2.</div>
<div class='t ' style='left:62.20px;top:398.70px;font-size:18.6px;line-height:22.32px;font-weight:bold;transform:scaleX(1.0418);'>Part 1: Calculating Yield To Maturity (YTM)</div>
<div class='t ' style='left:157.90px;top:427.22px;font-size:15.4px;line-height:18.48px;font-weight:bold;transform:scaleX(1.0591);'>Yield to Maturity</div>
<div class='t ' style='left:190.60px;top:450.92px;font-size:15.4px;line-height:18.48px;;transform:scaleX(0.9914);'>Par =</div>
<div class='t ' style='left:96.45px;top:475.12px;font-size:15.4px;line-height:18.48px;;transform:scaleX(1.0385);'>Coupon rate (%) =</div>
<div class='t ' style='left:145.60px;top:498.92px;font-size:15.4px;line-height:18.48px;;transform:scaleX(0.9927);'>TTM (Yrs) =</div>
<div class='t ' style='left:178.70px;top:522.92px;font-size:15.4px;line-height:18.48px;;transform:scaleX(1.0094);'>Price =</div>
<div class='t ' style='left:57.10px;top:571.02px;font-size:15.4px;line-height:18.48px;font-weight:bold;transform:scaleX(1.0515);'>Coupon payment ($) =</div>
<div class='t ' style='left:183.50px;top:618.92px;font-size:15.4px;line-height:18.48px;font-weight:bold;color:#c00000;transform:scaleX(1.0379);'>YTM =</div>
<div class='t ' style='left:387.50px;top:451.62px;font-size:15.4px;line-height:18.48px;font-style:italic;transform:scaleX(1.0676);'>Par/face value of the bond.</div>
<div class='t ' style='left:387.50px;top:475.52px;font-size:15.4px;line-height:18.48px;font-style:italic;transform:scaleX(1.0308);'>Coupon rate in %</div>
<div class='t ' style='left:387.50px;top:499.32px;font-size:15.4px;line-height:18.48px;font-style:italic;transform:scaleX(1.0769);'>Time to maturity in years</div>
<div class='t ' style='left:387.50px;top:523.32px;font-size:15.4px;line-height:18.48px;font-style:italic;transform:scaleX(1.0422);'>Bond value or price</div>
<div class='t ' style='left:387.50px;top:571.42px;font-size:15.4px;line-height:18.48px;font-style:italic;transform:scaleX(1.0417);'>Coupon payment per period ($) = Par * Coupon rate</div>
<div class='t ' style='left:387.50px;top:619.32px;font-size:15.4px;line-height:18.48px;font-style:italic;transform:scaleX(1.0578);'>Use Rate Function to Calculate Yield to Maturity.</div>
<div class='t ' style='left:12.40px;top:8.07px;font-size:12.6px;line-height:15.12px;;color:#444444;transform:scaleX(0.9558);'>File</div>
<div class='t ' style='left:63.50px;top:8.07px;font-size:12.6px;line-height:15.12px;-webkit-text-stroke:0.2px #323130;color:#323130;transform:scaleX(1.1133);'>Home</div>
<div class='t ' style='left:128.30px;top:8.07px;font-size:12.6px;line-height:15.12px;;color:#444444;transform:scaleX(1.0444);'>Insert</div>
<div class='t ' style='left:191.30px;top:8.07px;font-size:12.6px;line-height:15.12px;;color:#444444;transform:scaleX(1.0165);'>Page Layout</div>
<div class='t ' style='left:292.50px;top:8.07px;font-size:12.6px;line-height:15.12px;;color:#444444;transform:scaleX(1.0174);'>Formulas</div>
<div class='t ' style='left:374.00px;top:8.07px;font-size:12.6px;line-height:15.12px;;color:#444444;transform:scaleX(1.0410);'>Data</div>
<div class='t ' style='left:430.00px;top:8.07px;font-size:12.6px;line-height:15.12px;;color:#444444;transform:scaleX(0.9928);'>Review</div>
<div class='t ' style='left:498.00px;top:8.07px;font-size:12.6px;line-height:15.12px;;color:#444444;transform:scaleX(1.0562);'>View</div>
<div class='t ' style='left:553.00px;top:8.07px;font-size:12.6px;line-height:15.12px;;color:#444444;transform:scaleX(1.0731);'>Help</div>
<div class='t ' style='left:1197.20px;top:7.07px;font-size:12.6px;line-height:15.12px;-webkit-text-stroke:0.35px #217346;color:#217346;transform:scaleX(1.0295);'>Share</div>
<div class='t ' style='left:1273.30px;top:7.07px;font-size:12.6px;line-height:15.12px;-webkit-text-stroke:0.35px #217346;color:#217346;transform:scaleX(1.0872);'>Comments</div>
<div class='t ' style='left:9.50px;top:109.72px;font-size:11.6px;line-height:13.92px;;color:#3b3a39;transform:scaleX(1.0317);'>Clipboard</div>
<div class='t ' style='left:184.00px;top:109.72px;font-size:11.6px;line-height:13.92px;;color:#3b3a39;transform:scaleX(1.0430);'>Font</div>
<div class='t ' style='left:385.80px;top:109.72px;font-size:11.6px;line-height:13.92px;;color:#3b3a39;transform:scaleX(1.0492);'>Alignment</div>
<div class='t ' style='left:571.50px;top:109.72px;font-size:11.6px;line-height:13.92px;;color:#3b3a39;transform:scaleX(1.0061);'>Number</div>
<div class='t ' style='left:757.40px;top:109.72px;font-size:11.6px;line-height:13.92px;;color:#3b3a39;transform:scaleX(0.9310);'>Styles</div>
<div class='t ' style='left:903.30px;top:109.72px;font-size:11.6px;line-height:13.92px;;color:#3b3a39;transform:scaleX(0.9425);'>Cells</div>
<div class='t ' style='left:1015.40px;top:109.72px;font-size:11.6px;line-height:13.92px;;color:#3b3a39;transform:scaleX(1.0521);'>Editing</div>
<div class='t ' style='left:1116.30px;top:109.72px;font-size:11.6px;line-height:13.92px;;color:#3b3a39;transform:scaleX(0.9613);'>Analysis</div>
<div class='t ' style='left:1179.30px;top:109.72px;font-size:11.6px;line-height:13.92px;;color:#3b3a39;transform:scaleX(0.9923);'>Sensitivity</div>
<div class='t ' style='left:10.50px;top:70.72px;font-size:11.6px;line-height:13.92px;;color:#3b3a39;transform:scaleX(0.9678);'>Paste</div>
<div class='t ' style='left:689.70px;top:70.72px;font-size:11.6px;line-height:13.92px;;color:#3b3a39;transform:scaleX(1.0721);'>Conditional</div>
<div class='t ' style='left:685.30px;top:87.12px;font-size:11.6px;line-height:13.92px;;color:#3b3a39;transform:scaleX(1.0772);'>Formatting</div>
<div class='t ' style='left:760.50px;top:70.72px;font-size:11.6px;line-height:13.92px;;color:#3b3a39;transform:scaleX(1.0098);'>Format as</div>
<div class='t ' style='left:768.00px;top:87.12px;font-size:11.6px;line-height:13.92px;;color:#3b3a39;transform:scaleX(0.9921);'>Table</div>
<div class='t ' style='left:828.20px;top:70.72px;font-size:11.6px;line-height:13.92px;;color:#3b3a39;transform:scaleX(1.0358);'>Cell</div>
<div class='t ' style='left:817.00px;top:87.12px;font-size:11.6px;line-height:13.92px;;color:#3b3a39;transform:scaleX(0.9944);'>Styles</div>
<div class='t ' style='left:1013.30px;top:70.72px;font-size:11.6px;line-height:13.92px;;color:#3b3a39;transform:scaleX(1.0708);'>Sort &amp;</div>
<div class='t ' style='left:1011.70px;top:87.12px;font-size:11.6px;line-height:13.92px;;color:#3b3a39;transform:scaleX(0.9936);'>Filter</div>
<div class='t ' style='left:1056.70px;top:70.72px;font-size:11.6px;line-height:13.92px;;color:#3b3a39;transform:scaleX(1.0711);'>Find &amp;</div>
<div class='t ' style='left:1053.40px;top:87.12px;font-size:11.6px;line-height:13.92px;;color:#3b3a39;transform:scaleX(0.9803);'>Select</div>
<div class='t ' style='left:1116.30px;top:70.72px;font-size:11.6px;line-height:13.92px;;color:#3b3a39;transform:scaleX(1.0206);'>Analyze</div>
<div class='t ' style='left:1126.00px;top:87.12px;font-size:11.6px;line-height:13.92px;;color:#3b3a39;transform:scaleX(0.9551);'>Data</div>
<div class='t ' style='left:1178.10px;top:70.72px;font-size:11.6px;line-height:13.92px;;color:#a19f9d;transform:scaleX(1.0306);'>Sensitivity</div>
<div class='t ' style='left:899.50px;top:37.02px;font-size:11.6px;line-height:13.92px;;color:#3b3a39;transform:scaleX(1.0138);'>Insert</div>
<div class='t ' style='left:899.80px;top:59.82px;font-size:11.6px;line-height:13.92px;;color:#3b3a39;transform:scaleX(0.9936);'>Delete</div>
<div class='t ' style='left:899.80px;top:82.42px;font-size:11.6px;line-height:13.92px;;color:#3b3a39;transform:scaleX(1.0349);'>Format</div>
<div class='t ' style='left:102.60px;top:46.24px;font-size:12px;line-height:14.4px;;color:#201f1e;transform:scaleX(1.0113);'>Calibri</div>
<div class='t ' style='left:225.70px;top:46.24px;font-size:12px;line-height:14.4px;;color:#201f1e;transform:scaleX(0.8982);'>11</div>
<div class='t ' style='left:536.00px;top:46.24px;font-size:12px;line-height:14.4px;;color:#201f1e;transform:scaleX(0.9578);'>General</div>
<div class='t ' style='left:7.50px;top:141.70px;font-size:13px;line-height:15.6px;;color:#262626;transform:scaleX(0.9242);'>E1</div></div></body></html>
